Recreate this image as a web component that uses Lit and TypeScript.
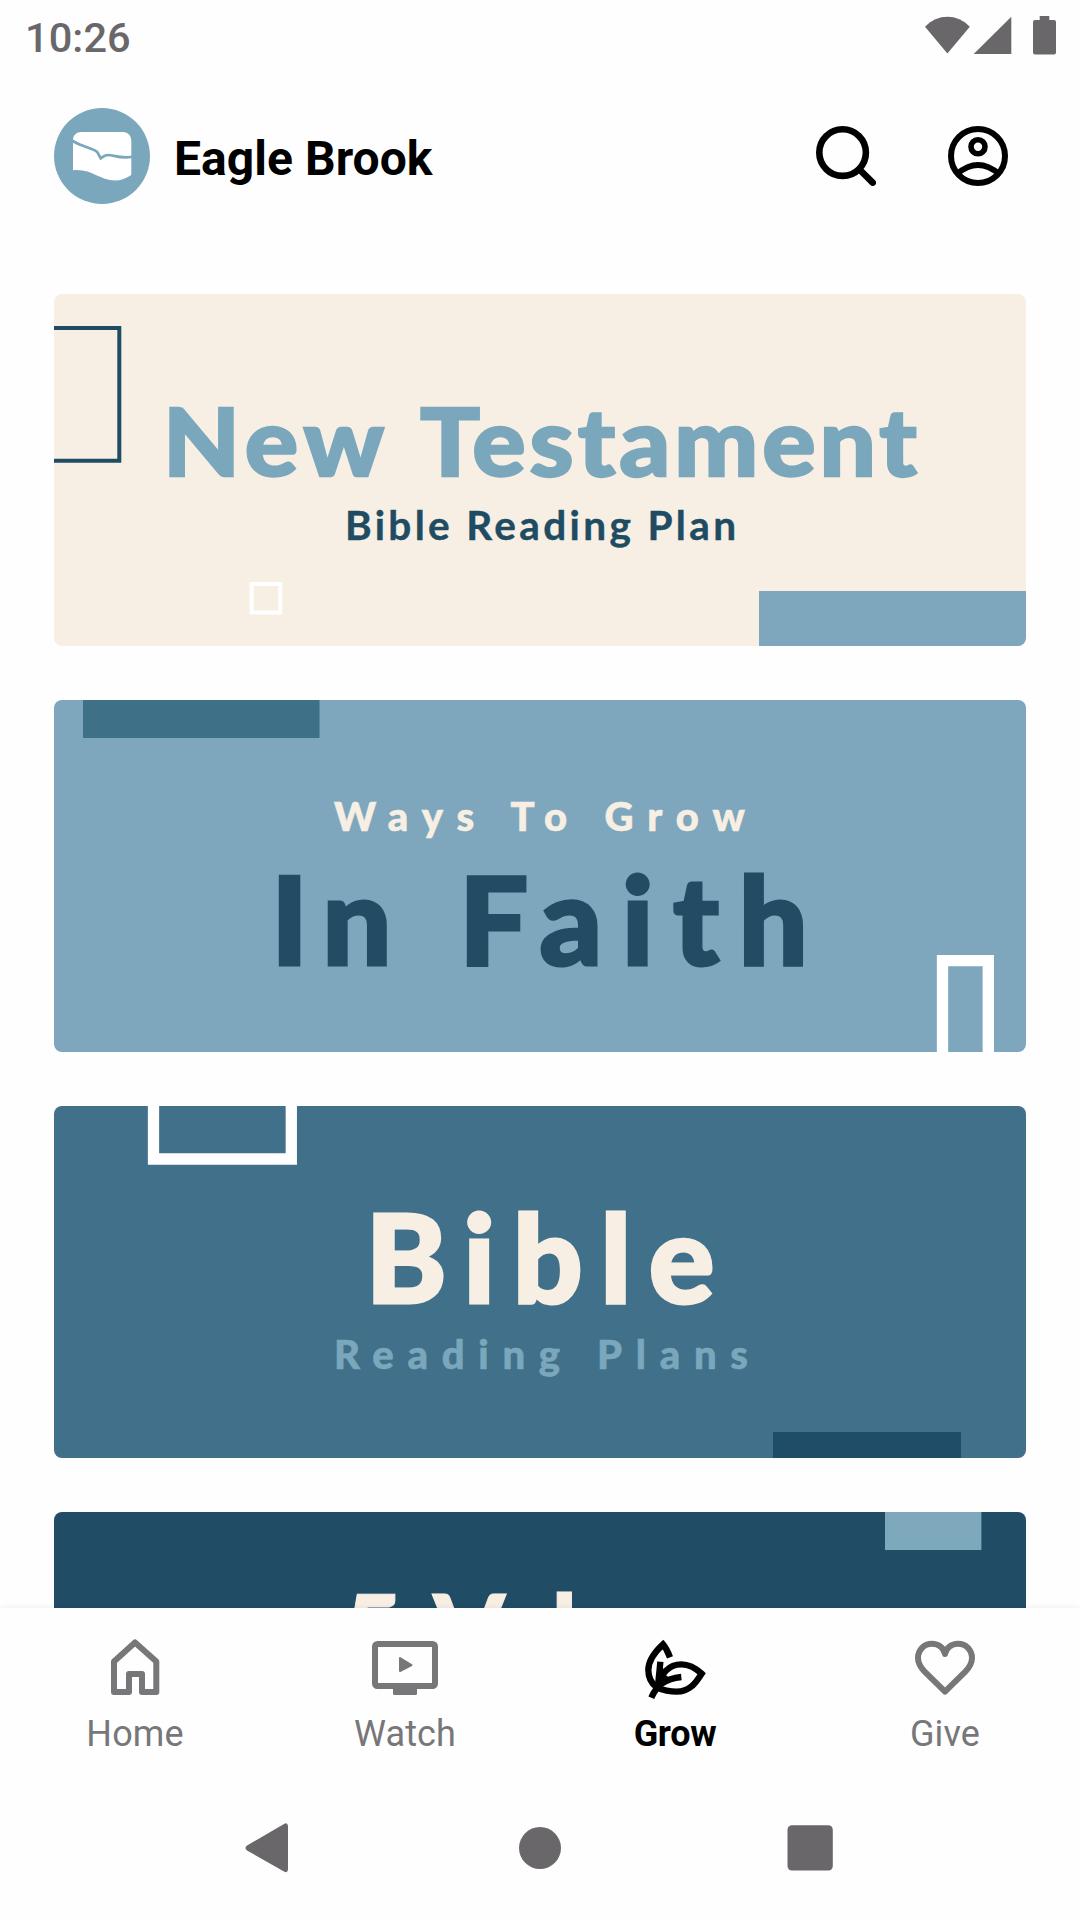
import { LitElement, html, css, svg } from "lit";
import { customElement, property } from "lit/decorators.js";
import { classMap } from "lit/directives/class-map.js";

const INK = "#69676a";

@customElement("status-bar")
class StatusBar extends LitElement {
  static styles = css`
    :host { display: flex; justify-content: space-between; height: 72px; padding: 0 24px 0 25px; color: #69676a; }
    .time { font-size: 41.5px; line-height: 76px; font-weight: 500; letter-spacing: 0.1px; }
    .icons { display: block; width: 132px; height: 40px; margin-top: 16px; }
  `;
  render() {
    return html`
      <span class="time">10:26</span>
      <svg class="icons" viewBox="924 16 132 40" fill=${INK}>
        <path d="M947.4 53.5 925 26.7C931.500 20 939 16.700 947.400 16.700S963.300 20 969.800 26.700Z" />
        <path d="M973.700 54 1011.300 16.700V54Z" />
        <path d="M1039.700 16h9.600v4H1054a2 2 0 0 1 2 2v30.500a2 2 0 0 1-2 2h-19a2 2 0 0 1-2-2V22a2 2 0 0 1 2-2h4.700Z" />
      </svg>
    `;
  }
}

@customElement("app-header")
class AppHeader extends LitElement {
  static styles = css`
    :host { display: flex; align-items: center; height: 96px; padding: 0 72px 0 54px; margin-top: 36px; }
    .logo { width: 96px; height: 96px; }
    .name { flex: 1; margin: 6px 0 0 24px; font-size: 48px; line-height: 56px; font-weight: 700; letter-spacing: 0.05px; color: #000; }
    .action { width: 60px; height: 60px; }
    .action + .action { margin-left: 72px; }
  `;
  render() {
    return html`
      <svg class="logo" viewBox="54 108 96 96">
        <circle cx="102" cy="156" r="48" fill="#7ba7bc" />
        <path fill="#fff" d="M73 140C73 135 76.500 132 81.500 132H123C128 132 131.300 135.500 131.300 141V175C126 178.500 121 180.500 115 180.500C99 180.500 92 168.500 73 170.300Z" />
        <path fill="none" stroke="#7ba7bc" stroke-width="2.700" d="M72 140.300C77 144 83 145.500 87 147.300C92 149.500 96 150 97.500 152.500Q99 155 100.700 158.300C103 157 104 155 108.500 155C113 155 121 159 132 156.800" />
      </svg>
      <span class="name">Eagle Brook</span>
      <svg class="action" viewBox="816 126 60 60" fill="none" stroke="#000" stroke-width="6.600" stroke-linecap="round">
        <circle cx="842.600" cy="152.600" r="23.300" />
        <path d="M860 170 872.700 182.700" />
      </svg>
      <svg class="action" viewBox="948 126 60 60" fill="none" stroke="#000" stroke-width="6">
        <circle cx="978" cy="156" r="27" />
        <circle cx="978" cy="146.800" r="7" stroke-width="5.600" />
        <path d="M957 174Q978 156 999 174" />
      </svg>
    `;
  }
}

interface Run { text: string; x: number; width: number; }
interface Line { runs: Run[]; y: number; size: number; weight: number; fill: string; bold?: number; stretch?: number; }
interface Banner { background: string; lines: Line[]; art: unknown; }

const CREAM = "#f8efe4";
const SKY = "#7ea7bd";
const STEEL = "#40708a";
const NAVY = "#204c66";

const banners: Banner[] = [
  {
    background: CREAM,
    lines: [
      { runs: [{ text: "New ", x: 109, width: 249 }, { text: "Testament", x: 366, width: 497 }], y: 182.200, size: 94, weight: 900, fill: "#7ba7bc", bold: 2.300, stretch: 1.06 },
      { runs: [{ text: "Bible Reading Plan", x: 291, width: 391 }], y: 246, size: 40.500, weight: 700, fill: "#204c63", bold: 0.400 },
    ],
    art: svg`
      <path fill="none" stroke="#204c63" stroke-width="4" d="M-4 34H65.300V166.700H-4" />
      <rect x="197.700" y="290" width="28.500" height="28.500" fill="none" stroke="#fff" stroke-width="4" />
      <rect x="705" y="297" width="267" height="55" fill="${SKY}" />`,
  },
  {
    background: SKY,
    lines: [
      { runs: [{ text: "Ways To Grow", x: 280, width: 411 }], y: 130.500, size: 40, weight: 900, fill: CREAM, bold: 0.600 },
      { runs: [{ text: "In ", x: 217, width: 165 }, { text: "Faith", x: 405, width: 349 }], y: 265, size: 122.500, weight: 900, fill: "#224c64", bold: 3 },
    ],
    art: svg`
      <rect x="29" y="0" width="236.500" height="38" fill="#3e7088" />
      <path fill="none" stroke="#fff" stroke-width="11.300" d="M888.500 360V260.700H934.300V360" />`,
  },
  {
    background: STEEL,
    lines: [
      { runs: [{ text: "Bible", x: 311.500, width: 349 }], y: 197, size: 122.500, weight: 900, fill: CREAM, bold: 3 },
      { runs: [{ text: "Reading Plans", x: 280, width: 414 }], y: 263, size: 40, weight: 900, fill: "#7ba7bc", bold: 0.600 },
    ],
    art: svg`
      <path fill="none" stroke="#fff" stroke-width="11.300" d="M99.500 -8V53H237.300V-8" />
      <rect x="719" y="326" width="188" height="26" fill="#1f4c66" />`,
  },
  {
    background: NAVY,
    lines: [{ runs: [{ text: "5 ", x: 289, width: 84 }, { text: "Values", x: 379, width: 305 }], y: 157, size: 103, weight: 900, fill: CREAM, bold: 1 }],
    art: svg`<rect x="831" y="0" width="96.400" height="38" fill="#7ea8bb" />`,
  },
];

@customElement("banner-card")
class BannerCard extends LitElement {
  static styles = css`
    :host { display: block; flex: none; height: 352px; border-radius: 8px; overflow: hidden; }
    .art { display: block; width: 100%; height: 100%; font-family: Lato, "Open Sans", sans-serif; }
  `;
  @property({ attribute: false }) banner!: Banner;
  private line(l: Line) {
    const k = l.stretch ?? 1;
    return svg`<text y=${l.y} transform="scale(${k} 1)" font-size=${l.size} font-weight=${l.weight} fill=${l.fill} stroke=${l.fill} stroke-width=${l.bold ?? 0}>${l.runs.map((r) => svg`<tspan x=${r.x / k} textLength=${r.width / k}>${r.text}</tspan>`)}</text>`;
  }
  render() {
    const b = this.banner;
    return html`
      <svg class="art" viewBox="0 0 972 352">
        <rect width="972" height="352" fill=${b.background} />
        ${b.art}
        ${b.lines.map((l) => this.line(l))}
      </svg>
    `;
  }
}

const tabs = [
  {
    label: "Home",
    icon: svg`<path fill="none" stroke="currentColor" stroke-width="6" stroke-linejoin="round" d="M114 1661.500 135 1642.500 156.300 1661.500V1692H142V1674H129V1692H114Z" />`,
  },
  {
    label: "Watch",
    icon: svg`<g transform="translate(-270 0)"><rect x="375" y="1644" width="60" height="42" rx="2.500" fill="none" stroke="currentColor" stroke-width="6" />
      <path fill="currentColor" d="M393 1688H417V1693.500Q417 1695 415.500 1695H394.500Q393 1695 393 1693.500Z" />
      <path fill="currentColor" stroke="currentColor" stroke-width="2" stroke-linejoin="round" d="M400 1658V1671L411.500 1665Z" /></g>`,
  },
  {
    label: "Grow",
    active: true,
    icon: svg`<g transform="translate(40 1600) scale(.33333)" fill="none" stroke="currentColor" stroke-width="19">
      <path d="M270 172C264 156 258 144 249 133C222 158 205 184 205 210C205 232 214 250 230 262" />
      <path d="M241 185C239 210 236 235 234 260" />
      <path d="M237 258C242 222 266 193 304 193C330 193 350 207 365 221C352 240 334 275 290 275C266 275 248 270 228 262" />
      <path d="M304 231C254 236 230 256 214 293" />
      <path d="M234 205H250V220L272 236L236 262Z" fill="currentColor" stroke="none" /></g>`,
  },
  {
    label: "Give",
    icon: svg`<g transform="translate(-230 1600) scale(.33333)" fill="none" stroke="currentColor" stroke-width="18" stroke-linejoin="round">
      <path d="M1095 275 1034 215C1020 200 1014 190 1014 174C1014 150 1032 131 1056 131C1076 131 1092 144 1095 162C1098 144 1114 131 1134 131C1158 131 1176 150 1176 174C1176 190 1170 200 1156 215Z" /></g>`,
  },
];

@customElement("tab-bar")
class TabBar extends LitElement {
  static styles = css`
    :host { display: grid; grid-template-columns: repeat(4, 1fr); height: 192px; background: #fefefe; box-shadow: 0 -1px 5px rgba(0, 0, 0, 0.06); clip-path: inset(-8px 0 0 0); position: relative; }
    .tab { display: flex; flex-direction: column; align-items: center; padding-top: 24px; color: #777678; }
    .icon { display: block; width: 90px; height: 72px; }
    .label { margin-top: 8px; font-size: 36px; line-height: 44px; letter-spacing: 0.1px; }
    .active { color: #000; }
    .active .label { font-weight: 700; letter-spacing: -0.3px; }
  `;
  render() {
    return tabs.map((t) => html`
      <div class=${classMap({ tab: true, active: !!t.active })}>
        <svg class="icon" viewBox="90 1632 90 72">${t.icon}</svg>
        <span class="label">${t.label}</span>
      </div>
    `);
  }
}

@customElement("system-nav")
class SystemNav extends LitElement {
  static styles = css`
    :host { display: flex; justify-content: space-between; align-items: center; height: 96px; padding: 0 240px; }
    .key { width: 60px; height: 60px; }
  `;
  render() {
    return html`
      <svg class="key" viewBox="240 1818 60 60" fill=${INK}><path d="M288 1826V1869.500Q287.500 1873.500 284 1871.500L247 1850.500Q244 1848 247 1845.500L284 1824Q287.500 1822 288 1826Z" /></svg>
      <svg class="key" viewBox="510 1818 60 60" fill=${INK}><circle cx="540" cy="1848" r="21" /></svg>
      <svg class="key" viewBox="780 1818 60 60" fill=${INK}><rect x="787.500" y="1825.300" width="45.300" height="45.300" rx="4.500" /></svg>
    `;
  }
}

@customElement("app-root")
class AppRoot extends LitElement {
  static styles = css`
    :host { display: flex; flex-direction: column; width: 1080px; height: 1920px; overflow: hidden; background: #fefefe; font-family: Roboto, sans-serif; }
    .feed { display: flex; flex-direction: column; gap: 54px; flex: 1; min-height: 0; overflow: hidden; padding: 0 54px; margin-top: 90px; }
    .bottom { flex: none; height: 312px; }
  `;
  render() {
    return html`
      <status-bar></status-bar>
      <app-header></app-header>
      <main class="feed">${banners.map((b) => html`<banner-card .banner=${b}></banner-card>`)}</main>
      <footer class="bottom">
        <tab-bar></tab-bar>
        <system-nav></system-nav>
      </footer>
    `;
  }
}
